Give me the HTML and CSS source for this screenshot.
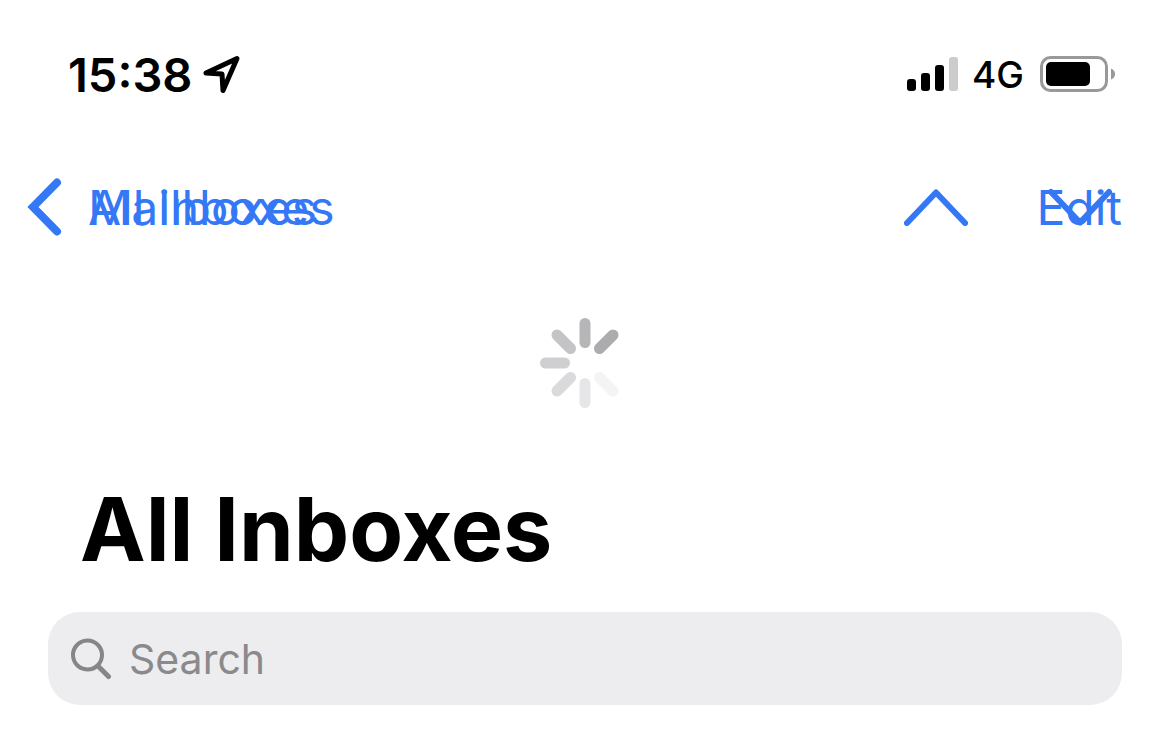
FILE: index.html
```
<!DOCTYPE html>
<html lang="en">
<head>
	<meta charset="utf-8">
	<meta name="viewport" content="width=device-width, initial-scale=1">
	<title>All Inboxes</title>
	<link rel="stylesheet" href="styles.css">
</head>
<body>
	<div class="status-bar">
		<div class="status-left">
			<time class="clock">15:38</time>
			<svg class="location" width="40" height="40" viewBox="0 0 40 40" aria-hidden="true">
				<path d="M4 19 L35 4.500 L21 36.500 L20 20 Z"/>
			</svg>
		</div>
		<div class="status-right">
			<svg class="signal" width="52" height="36" viewBox="0 0 52 36" aria-hidden="true">
				<rect x="1" y="23" width="9" height="12" rx="3"/>
				<rect x="15" y="17" width="9" height="18" rx="3"/>
				<rect x="29" y="9" width="9" height="26" rx="3"/>
				<rect class="weak" x="43" y="1" width="9" height="34" rx="3"/>
			</svg>
			<span class="network">4G</span>
			<svg class="battery" width="76" height="36" viewBox="0 0 76 36" aria-hidden="true">
				<rect class="shell" x="1.500" y="1.500" width="65" height="33" rx="9"/>
				<rect x="6" y="6" width="44" height="24" rx="5"/>
				<path class="tip" d="M71 12.500 Q75 14 75 18 Q75 22 71 23.500 Z"/>
			</svg>
		</div>
	</div>

	<nav class="nav-bar">
		<a class="back" href="#">
			<svg width="36" height="60" viewBox="0 0 36 60" aria-hidden="true">
				<path d="M31 5.500 L7 30 L31 54.500"/>
			</svg>
			<span class="back-labels">
				<span>Mailboxes</span>
				<span>All Inboxes</span>
			</span>
		</a>
		<div class="actions">
			<button class="prev" type="button" aria-label="Previous message">
				<svg width="64" height="38" viewBox="0 0 64 38" aria-hidden="true">
					<path d="M3 35 L32 4.500 L61 35"/>
				</svg>
			</button>
			<div class="stack">
				<button class="edit" type="button">Edit</button>
				<button class="next" type="button" aria-label="Next message">
					<svg width="64" height="38" viewBox="0 0 64 38" aria-hidden="true">
						<path d="M3 4 L32 34.500 L61 4"/>
					</svg>
				</button>
			</div>
		</div>
	</nav>

	<main class="content">
		<svg class="spinner" width="90" height="90" viewBox="-45 -45 90 90" role="img" aria-label="Loading">
			<path stroke="#b6b6b8" d="M0 -20.500 V-39.500"/>
			<path stroke="#acacae" d="M14.500 -14.500 L28 -28"/>
			<path stroke="#f4f4f5" d="M14.500 14.500 L28 28"/>
			<path stroke="#e6e6e8" d="M0 20.500 V39.500"/>
			<path stroke="#dadadc" d="M-14.500 14.500 L-28 28"/>
			<path stroke="#cfcfd1" d="M-20.500 0 H-39.500"/>
			<path stroke="#c4c4c6" d="M-14.500 -14.500 L-28 -28"/>
		</svg>
		<h1>All Inboxes</h1>
		<label class="search">
			<svg width="42" height="42" viewBox="0 0 42 42" aria-hidden="true">
				<circle cx="17.500" cy="17" r="14.500"/>
				<path class="handle" d="M28 28 L38.500 38.500"/>
			</svg>
			<input type="search" placeholder="Search" aria-label="Search">
		</label>
	</main>
</body>
</html>
```

FILE: styles.css
```
/* fonts */
body {
	font-family: Inter, "Liberation Sans", sans-serif;
}

button,
input {
	font: inherit;
}

.clock {
	font-size: 47px;
	font-weight: 600;
}

.network {
	font-size: 37px;
	font-weight: 500;
}

.nav-bar {
	font-size: 48px;
}

h1 {
	font-size: 88px;
	font-weight: 700;
	line-height: 108px;
}

.search {
	font-size: 41px;
}

/* layout */
* {
	box-sizing: border-box;
}

body {
	margin: 0;
}

.status-bar,
.status-left,
.status-right,
.nav-bar,
.back,
.actions {
	display: flex;
	align-items: center;
}

.status-bar,
.nav-bar {
	justify-content: space-between;
}

.status-bar {
	height: 148px;
	padding: 0 54px 0 68px;
}

.status-left {
	gap: 10px;
}

.status-right {
	gap: 16px;
}

.signal {
	margin-right: -2px;
}

.nav-bar {
	height: 118px;
	padding: 0 48px 0 26px;
}

.back {
	gap: 26px;
	text-decoration: none;
}

.back-labels,
.stack {
	display: grid;
	align-items: center;
}

/* both labels share one cell while the screens cross over */
.back-labels span,
.stack button {
	grid-area: 1 / 1;
}

.actions {
	gap: 68px;
}

button {
	padding: 0;
	border: 0;
}

.next {
	justify-self: end;
	padding-right: 10px;
}

svg {
	display: block;
	flex: none;
}

.content {
	padding: 52px 48px 44px;
}

.spinner {
	margin: 0 auto;
}

h1 {
	margin: 67px 32px 29px;
}

.search {
	display: flex;
	align-items: center;
	gap: 17px;
	height: 93px;
	padding: 0 22px;
	border-radius: 32px;
}

.search input {
	flex: 1;
	min-width: 0;
	padding: 0;
	border: 0;
	outline: 0;
}

/* colors */
body {
	background-color: #fff;
	color: #000;
}

button,
.search input {
	background: none;
}

.back,
.actions button {
	color: #3478f6;
}

.location,
.nav-bar svg,
.spinner,
.search svg {
	fill: none;
	stroke-linecap: round;
	stroke-linejoin: round;
}

.location {
	stroke: #000;
	stroke-width: 5;
}

.signal .weak {
	fill: #ccc;
}

.battery .shell {
	fill: none;
	stroke: #999;
	stroke-width: 3;
}

.battery .tip {
	fill: #999;
}

.nav-bar svg {
	stroke: currentColor;
	stroke-width: 6;
}

.nav-bar .back svg {
	stroke-width: 8;
	stroke-linejoin: miter;
}

.spinner {
	stroke-width: 11;
}

.search {
	background-color: #ededef;
}

.search svg {
	stroke: #868688;
	stroke-width: 4;
}

.search .handle {
	stroke-width: 5;
}

.search input::placeholder {
	color: #8a8a8d;
	opacity: 1;
}
```
